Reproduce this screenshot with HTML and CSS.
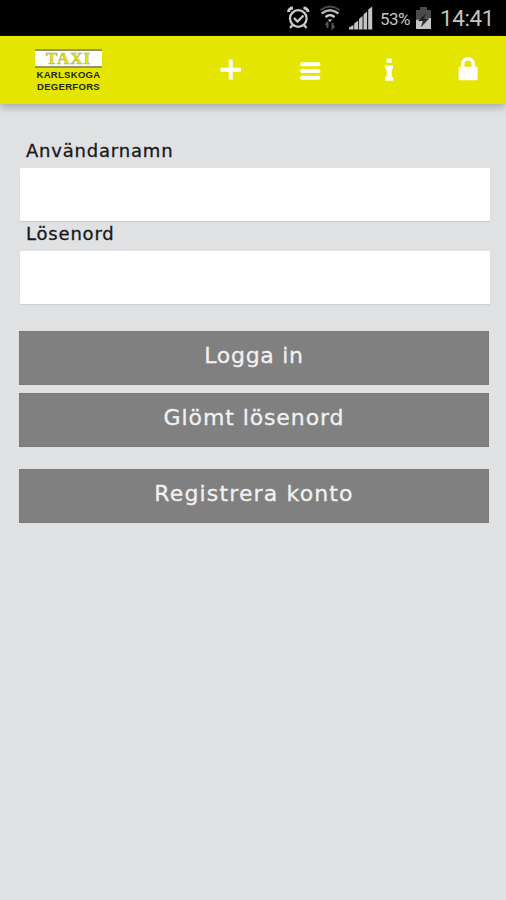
FILE: index.html
```html
<!DOCTYPE html>
<html lang="sv">
<head>
<meta charset="utf-8">
<title>Taxi Karlskoga Degerfors</title>
<link rel="stylesheet" href="styles.css">
</head>
<body>
<div class="status">
  <svg class="status-icons" width="90" height="36" viewBox="0 0 90 36">
    <g fill="none" stroke="#c9c9c9" stroke-width="2.300">
      <circle cx="12.3" cy="18.5" r="8.3"/>
      <path d="M8 18l3.5 3.5 6-6"/>
      <path d="M2.500 12c0-2.500 2-4 4.500-4M22 12c0-2.500-2-4-4.500-4" stroke-width="3"/>
      <path d="M6.500 25l-2.500 3M18 25l2.500 3"/>
    </g>
    <g fill="none">
      <path d="M34.500 10q9.500-7 19 0" stroke="#4a4a4a" stroke-width="2"/>
      <path d="M35.500 13.500q8.500-6.500 17 0" stroke="#b5b5b5" stroke-width="2.300"/>
      <path d="M39.500 17q4.500-3.800 9 0" stroke="#d2d2d2" stroke-width="2.300"/>
      <path d="M42 19.500h4l-2 2.500z" fill="#ddd"/>
      <path d="M41.500 28v-5l-2 2M46.500 23v5l2-2" stroke="#555" stroke-width="2"/>
    </g>
    <path d="M63 29.500v-2l4.500-2.500v4.500zM68.200 29.500v-6l4-3v9zM73 29.500v-10.500l3.600-3v13.500zM77.500 29.500v-15l3.600-3v18zM82.200 29.500v-20l4-3v23z" fill="#c4c4c4"/>
  </svg>
  <span class="percent">53%</span>
  <svg class="battery" width="15" height="24" viewBox="0 0 15 24">
    <path d="M0 3h4V0h7v3h4v19H0z" fill="#4b4b4b"/>
    <path d="M0 13l6-1 9-1v11H0z" fill="#c4c4c4"/>
    <path d="M10 6L2 14h5l-2 6 8-8.500H8z" fill="#222"/>
    <path d="M7 14l-2 6 8-8.500z" fill="#333"/>
  </svg>
  <span class="clock">14:41</span>
</div>
<header class="toolbar">
  <div class="logo">
    <div class="logo-taxi">TAXI</div>
    <div class="logo-town">KARLSKOGA</div>
    <div class="logo-town">DEGERFORS</div>
  </div>
  <nav class="nav">
    <svg width="22" height="26" viewBox="0 0 22 26"><path d="M8.700 2.500h4v8.300h8.200v4h-8.200v7.700h-4v-7.700H.4v-4h8.300z" fill="#fff"/></svg>
    <svg width="22" height="26" viewBox="0 0 22 26"><path d="M3 7.300h16.500M3 14.100h16.500M3 20.700h16.500" stroke="#fff" stroke-width="4" stroke-linecap="round"/></svg>
    <svg width="22" height="26" viewBox="0 0 22 26"><path d="M8.500 1.500h5.300v4.200H8.500zM7 8.500h8v3l-1.300 1v7l1.600 1v3.200H7v-3.200l1.600-1v-7l-1.600-1z" fill="#fff"/></svg>
    <svg width="22" height="26" viewBox="0 0 22 26"><path d="M5.700 12V7a5.300 5.300 0 0 1 10.600 0V12" fill="none" stroke="#fff" stroke-width="3.500"/><rect x="1.600" y="9.800" width="19" height="13.500" rx="1" fill="#fff"/></svg>
  </nav>
</header>
<main class="form">
  <label class="label" for="user">Användarnamn</label>
  <input class="field" id="user" type="text">
  <label class="label" for="pass">Lösenord</label>
  <input class="field" id="pass" type="password">
  <div class="actions">
    <button class="button login">Logga in</button>
    <button class="button forgot">Glömt lösenord</button>
    <button class="button register">Registrera konto</button>
  </div>
</main>
</body>
</html>
```
FILE: styles.css
```css
* { box-sizing: border-box; }
body {
  margin: 0;
  min-height: 900px;
  background: #e0e1e3;
  font-family: "DejaVu Sans", sans-serif;
}
.status {
  display: flex;
  align-items: center;
  height: 36px;
  padding-left: 286px;
  background: #000;
  color: #c4c4c4;
  font-family: Roboto, "Liberation Sans", sans-serif;
  white-space: nowrap;
}
.status-icons { flex: none; }
.percent { width: 35px; margin: 2px 0 0 4px; font-size: 17px; letter-spacing: -0.5px; }
.battery { flex: none; margin: 1px 9px 0 1px; }
.clock { font-size: 22.500px; letter-spacing: -0.4px; }
.toolbar {
  display: flex;
  align-items: flex-start;
  height: 67.500px;
  padding: 13px 27px 0 35px;
  background: #e4e500;
  box-shadow: 0 3px 8px rgba(70, 85, 90, .4);
}
.logo { width: 67px; text-align: center; white-space: nowrap; }
.logo-taxi {
  height: 19px;
  border-top: 2px solid #94946c;
  border-bottom: 2px solid #94946c;
  background: #fff;
  color: #e4e500;
  font: bold 17px/15px "Liberation Serif", serif;
  letter-spacing: .9px;
  -webkit-text-stroke: .5px #b4b440;
}
.logo-town {
  height: 12px;
  color: #24240a;
  font: bold 9.500px/13px "Liberation Sans", sans-serif;
  letter-spacing: .3px;
}
.nav {
  display: flex;
  flex: 1;
  justify-content: space-between;
  margin: 8px 0 0 118px;
}
.form { display: flex; flex-direction: column; padding: 34px 16px 0 19px; }
.label {
  height: 30px;
  padding: 2px 0 0 7px;
  color: #17181a;
  font-size: 18px;
  line-height: 21px;
  letter-spacing: .8px;
  -webkit-text-stroke: .3px #17181a;
}
.field {
  width: 470px;
  height: 53px;
  margin: 0 0 0 1px;
  padding: 0 8px;
  border: 0;
  border-radius: 1px;
  background: #fff;
  box-shadow: 0 1px 1px #c9cbcc;
}
.actions { display: flex; flex-direction: column; width: 470px; margin-top: 27px; }
.button {
  height: 54px;
  margin: 0;
  padding: 0 0 4px;
  border: 1px solid #7a7a7a;
  background: #808080;
  color: #f1f1f1;
  font: 22px/26px "DejaVu Sans", sans-serif;
  letter-spacing: .9px;
  -webkit-text-stroke: .3px #f1f1f1;
}
.login { letter-spacing: .7px; }
.forgot { margin-top: 8px; }
.register { margin-top: 22px; letter-spacing: 1.150px; }
```
